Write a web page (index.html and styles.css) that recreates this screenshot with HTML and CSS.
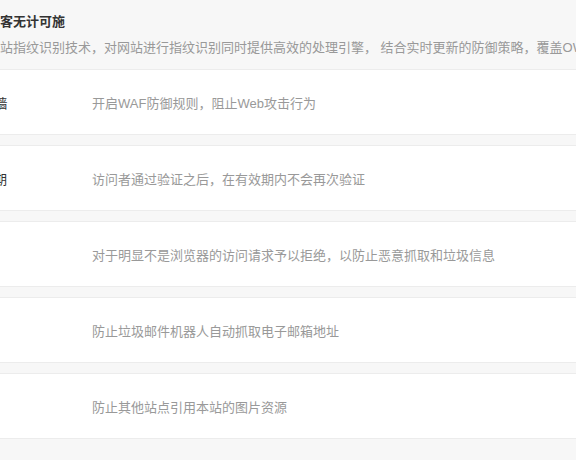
FILE: index.html
```html
<!DOCTYPE html>
<html lang="zh-CN">
<head>
  <meta charset="UTF-8" />
  <meta name="viewport" content="width=device-width, initial-scale=1.0"/>
  <title>安全防护</title>
  <link rel="stylesheet" href="styles.css">
</head>
<body>
  <div class="panel">
    <div class="panel-head">
      <h3>全方位防护，让黑客无计可施</h3>
      <p>采用自主研发的网站指纹识别技术，对网站进行指纹识别同时提供高效的处理引擎， 结合实时更新的防御策略，覆盖OWASP常见的Web攻击类型</p>
    </div>

    <div class="rule-list">
      <div class="rule">
        <span class="rule-name">Web应用防火墙</span>
        <span class="rule-desc">开启WAF防御规则，阻止Web攻击行为</span>
      </div>
      <div class="rule">
        <span class="rule-name">人机验证有效期</span>
        <span class="rule-desc">访问者通过验证之后，在有效期内不会再次验证</span>
      </div>
      <div class="rule">
        <span class="rule-name">浏览器识别</span>
        <span class="rule-desc">对于明显不是浏览器的访问请求予以拒绝，以防止恶意抓取和垃圾信息</span>
      </div>
      <div class="rule">
        <span class="rule-name">邮箱防护</span>
        <span class="rule-desc">防止垃圾邮件机器人自动抓取电子邮箱地址</span>
      </div>
      <div class="rule">
        <span class="rule-name">图片防盗链</span>
        <span class="rule-desc">防止其他站点引用本站的图片资源</span>
      </div>
    </div>
  </div>
</body>
</html>
```

FILE: styles.css
```css
:root {
  --page-bg: #f7f7f7;
  --card-bg: #ffffff;
  --border: #ececec;
  --title: #333333;
  --muted: #999999;
}

* {
  box-sizing: border-box;
  margin: 0;
  padding: 0;
}

body {
  font-family: "Liberation Sans", "Noto Sans CJK SC", sans-serif;
  font-size: 13px;
  background: var(--page-bg);
  color: var(--title);
  overflow: hidden;
}

.panel {
  width: 900px;
  margin-left: -104px;
}

.panel-head {
  padding: 12px 0 11px;
}

.panel-head h3 {
  font-size: 13px;
  font-weight: bold;
  line-height: 20px;
  color: var(--title);
}

.panel-head p {
  margin-top: 6px;
  line-height: 20px;
  color: var(--muted);
  white-space: nowrap;
}

.rule-list {
  display: flex;
  flex-direction: column;
  gap: 10px;
}

.rule {
  display: grid;
  grid-template-columns: 176px 1fr;
  align-items: center;
  height: 66px;
  padding-left: 20px;
  background: var(--card-bg);
  border-top: 1px solid var(--border);
  border-bottom: 1px solid var(--border);
}

.rule-name {
  color: var(--title);
  white-space: nowrap;
}

.rule-desc {
  color: var(--muted);
}
```
